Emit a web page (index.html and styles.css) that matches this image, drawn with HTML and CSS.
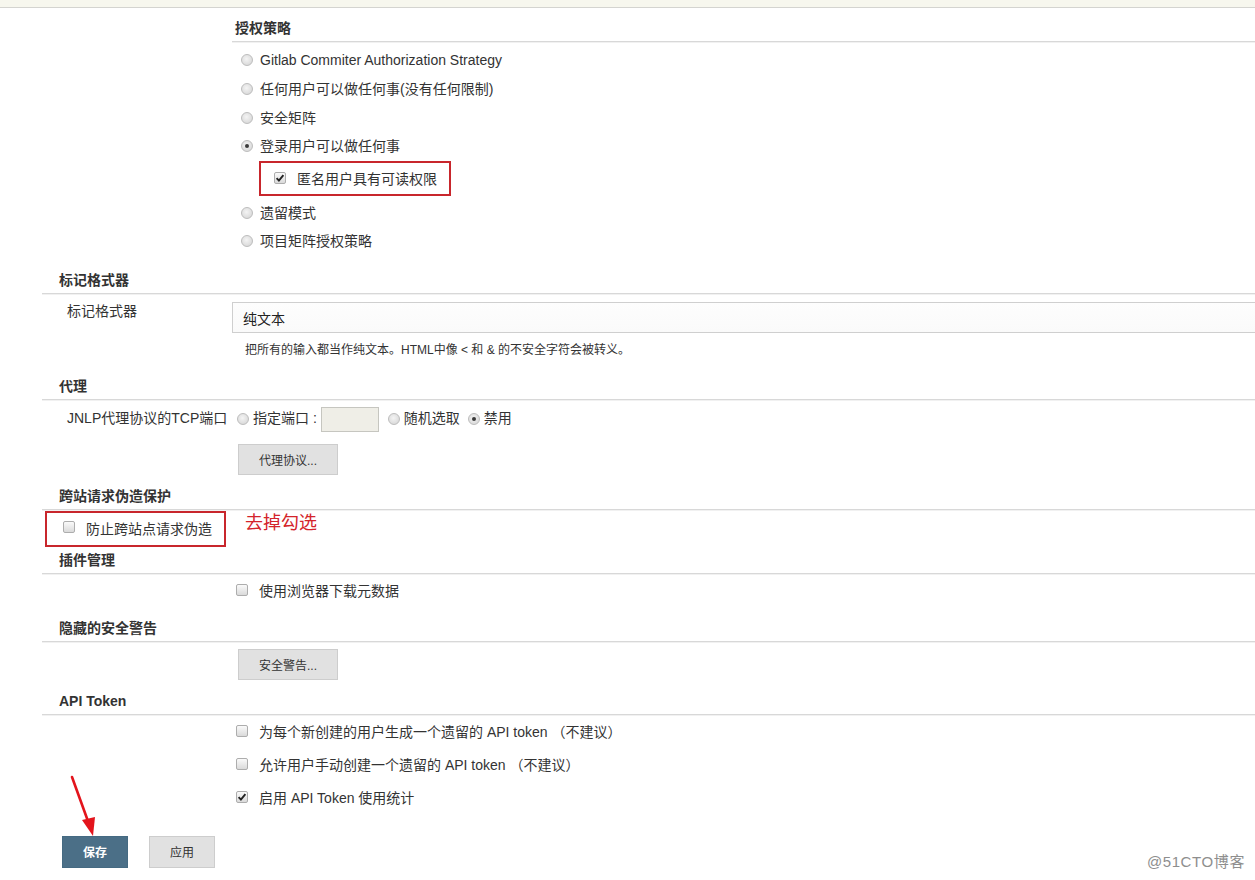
FILE: index.html
```html
<!DOCTYPE html>
<html lang="zh">
<head>
<meta charset="utf-8">
<title>全局安全配置</title>
<link rel="stylesheet" href="styles.css">
</head>
<body>
<div class="topbar"></div>
<div class="page">
  <section class="sec sec-auth">
    <h3 class="sec-title">授权策略</h3>
    <ul class="radio-list">
      <li class="opt first"><span class="radio"></span>Gitlab Commiter Authorization Strategy</li>
      <li class="opt first"><span class="radio"></span>任何用户可以做任何事(没有任何限制)</li>
      <li class="opt first"><span class="radio"></span>安全矩阵</li>
      <li class="opt first"><span class="radio checked"></span>登录用户可以做任何事</li>
      <li class="mark-box mark-anon"><span class="check checked"><svg viewBox="0 0 12 12" width="12" height="12"><path d="M2.6 6.2 L4.9 8.6 L9.4 3.2" fill="none" stroke="#222" stroke-width="1.9"/></svg></span>匿名用户具有可读权限</li>
      <li class="opt opt-after"><span class="radio"></span>遗留模式</li>
      <li class="opt"><span class="radio"></span>项目矩阵授权策略</li>
    </ul>
  </section>

  <section class="sec sec-markup">
    <h3 class="sec-title">标记格式器</h3>
    <div class="row">
      <div class="label">标记格式器</div>
      <div class="field">
        <div class="select">纯文本</div>
        <div class="desc">把所有的输入都当作纯文本。HTML中像 &lt; 和 &amp; 的不安全字符会被转义。</div>
      </div>
    </div>
  </section>

  <section class="sec sec-proxy">
    <h3 class="sec-title">代理</h3>
    <div class="row jnlp-row">
      <div class="label">JNLP代理协议的TCP端口</div>
      <div class="field inline-opts">
        <span class="radio"></span><span class="opt-text">指定端口 :</span>
        <span class="port-input"></span>
        <span class="radio r2"></span><span class="opt-text">随机选取</span>
        <span class="radio checked r3"></span><span class="opt-text">禁用</span>
      </div>
    </div>
    <div class="row">
      <div></div>
      <div class="field"><button class="btn">代理协议...</button></div>
    </div>
  </section>

  <section class="sec sec-csrf">
    <h3 class="sec-title">跨站请求伪造保护</h3>
    <div class="csrf-row">
      <div class="mark-box mark-csrf"><span class="check"></span>防止跨站点请求伪造</div>
      <div class="note">去掉勾选</div>
    </div>
  </section>

  <section class="sec sec-plugin">
    <h3 class="sec-title">插件管理</h3>
    <div class="row">
      <div></div>
      <div class="field"><div class="cb-row cb-plugin"><span class="check"></span>使用浏览器下载元数据</div></div>
    </div>
  </section>

  <section class="sec sec-warn">
    <h3 class="sec-title">隐藏的安全警告</h3>
    <div class="row">
      <div></div>
      <div class="field"><button class="btn">安全警告...</button></div>
    </div>
  </section>

  <section class="sec sec-api">
    <h3 class="sec-title">API Token</h3>
    <div class="row">
      <div></div>
      <div class="field">
        <div class="cb-row tall"><span class="check"></span>为每个新创建的用户生成一个遗留的 API token （不建议）</div>
        <div class="cb-row tall"><span class="check"></span>允许用户手动创建一个遗留的 API token （不建议）</div>
        <div class="cb-row tall"><span class="check checked"><svg viewBox="0 0 12 12" width="12" height="12"><path d="M2.6 6.2 L4.9 8.6 L9.4 3.2" fill="none" stroke="#222" stroke-width="1.9"/></svg></span>启用 API Token 使用统计</div>
      </div>
    </div>
  </section>

  <div class="actions">
    <button class="btn-save">保存</button>
    <button class="btn-apply">应用</button>
  </div>
</div>

<svg class="arrow" width="40" height="70" viewBox="0 0 40 70">
  <line x1="11" y1="3" x2="28" y2="50" stroke="#e3141c" stroke-width="2.6" stroke-linecap="round"/>
  <path d="M21 46 L32 62 L34 43 Z" fill="#e3141c"/>
</svg>
<div class="watermark">@51CTO博客</div>
</body>
</html>
```
FILE: styles.css
```css
html, body {
  margin: 0;
  padding: 0;
  background: #fff;
}
body {
  font-family: "Liberation Sans", "Noto Sans CJK SC", sans-serif;
  font-size: 14px;
  color: #333;
  width: 1255px;
  height: 880px;
  overflow: hidden;
  position: relative;
}
.topbar {
  height: 7px;
  background: #f7f7ee;
  border-bottom: 1px solid #d4d4d0;
}
.page {
  padding-left: 42px;
}
.sec-title {
  margin: 0;
  padding: 0 0 3px 17px;
  font-size: 14px;
  font-weight: bold;
  line-height: 20px;
  color: #333;
  border-bottom: 1px solid #d8d8d8;
  box-shadow: 0 1px 0 #f1f1f1;
}
.sec { margin: 0; }
.sec-auth { padding-left: 190px; margin-top: 10px; }
.sec-auth .sec-title { padding-left: 3px; }
.radio-list {
  list-style: none;
  margin: 4px 0 0;
  padding: 0;
}
.opt {
  display: flex;
  align-items: center;
  height: 28px;
  padding-left: 9px;
  gap: 7px;
  line-height: 20px;
}
.opt.first { height: 28.67px; }
.opt-after { margin-top: 3px; }
.radio {
  flex: none;
  width: 12px;
  height: 12px;
  box-sizing: border-box;
  border-radius: 50%;
  border: 1px solid #bdbdbd;
  background: radial-gradient(circle at 45% 40%, #f4f4f4 0%, #dcdcdc 70%, #cfcfcf 100%);
  display: inline-flex;
  align-items: center;
  justify-content: center;
}
.radio.checked::after {
  content: "";
  width: 4px;
  height: 4px;
  border-radius: 50%;
  background: #3a3a3a;
}
.check {
  flex: none;
  width: 12px;
  height: 12px;
  box-sizing: border-box;
  border: 1px solid #adadad;
  border-radius: 2px;
  background: linear-gradient(#fafafa, #dadada);
  display: inline-flex;
  align-items: center;
  justify-content: center;
  overflow: hidden;
}
.check svg { display: block; margin: -1px; }
.mark-box {
  display: flex;
  align-items: center;
  box-sizing: border-box;
  border: 2px solid #c8262c;
  gap: 11px;
}
.mark-anon {
  margin: 0 0 0 27px;
  width: 192px;
  height: 35px;
  padding-left: 13px;
}
.sec-markup { margin-top: 15px; }
.row {
  display: grid;
  grid-template-columns: 190px 1fr;
}
.label {
  padding: 7px 0 0 25px;
  line-height: 20px;
}
.select {
  margin-top: 8px;
  height: 31px;
  box-sizing: border-box;
  width: 1040px;
  border: 1px solid #cfcfcf;
  background: linear-gradient(#fdfdfd, #fafafa);
  padding-left: 10px;
  line-height: 32px;
  color: #222;
}
.desc {
  margin-top: 9px;
  padding-left: 13px;
  font-size: 12px;
  line-height: 16px;
}
.sec-proxy { margin-top: 18px; }
.jnlp-row {
  padding: 7px 0 6px;
  align-items: center;
}
.jnlp-row .label { padding-top: 0; margin-top: -2px; }
.inline-opts {
  display: flex;
  align-items: center;
  padding-left: 5px;
}
.inline-opts .opt-text { margin-left: 4px; line-height: 20px; margin-top: -2px; }
.port-input {
  margin-left: 4px;
  width: 58px;
  height: 25px;
  box-sizing: border-box;
  border: 1px solid #c6c6c0;
  background: #efeee7;
}
.inline-opts .r2 { margin-left: 9px; }
.inline-opts .r3 { margin-left: 8px; }
.btn {
  margin: 6px 0 0 6px;
  width: 100px;
  height: 31px;
  border: 1px solid #cdcdcd;
  background: #e1e1e1;
  font-family: "Liberation Sans", "Noto Sans CJK SC", sans-serif;
  font-size: 12px;
  color: #333;
  padding: 0;
}
.sec-csrf { margin-top: 11px; }
.csrf-row {
  display: flex;
  align-items: flex-start;
  margin-top: 1px;
}
.mark-csrf {
  margin-left: 3px;
  width: 181px;
  height: 36px;
  padding-left: 16px;
  line-height: 20px;
}
.mark-csrf .check { margin-top: -3px; }
.note {
  margin-left: 19px;
  font-size: 18px;
  line-height: 24px;
  color: #d4242b;
}
.sec-plugin { margin-top: 3px; }
.cb-row {
  display: flex;
  align-items: center;
  gap: 11px;
  padding-left: 4px;
  height: 28px;
  line-height: 20px;
}
.cb-plugin { margin-top: 3px; }
.cb-row.tall { height: 33px; }
.cb-row .check { margin-top: -2px; }
.sec-warn { margin-top: 13px; }
.sec-warn .btn { margin-top: 7px; }
.sec-api { margin-top: 11px; }
.sec-api .field { margin-top: 1px; }
.actions {
  display: flex;
  gap: 21px;
  margin: 21px 0 0 20px;
}
.btn-save, .btn-apply {
  width: 66px;
  height: 32px;
  padding: 0;
  font-family: "Liberation Sans", "Noto Sans CJK SC", sans-serif;
  font-size: 12px;
}
.btn-save {
  background: #4b6f87;
  border: 1px solid #456a82;
  color: #fff;
  font-weight: bold;
}
.btn-apply {
  background: #e1e1e1;
  border: 1px solid #cdcdcd;
  color: #333;
}
.arrow {
  position: absolute;
  left: 61px;
  top: 774px;
}
.watermark {
  position: absolute;
  right: 10px;
  top: 851px;
  font-size: 15px;
  letter-spacing: 0.6px;
  line-height: 22px;
  color: #8e8e8e;
  text-shadow: 0 0 1px #fff, 1px 1px 0 #fff;
}
```
